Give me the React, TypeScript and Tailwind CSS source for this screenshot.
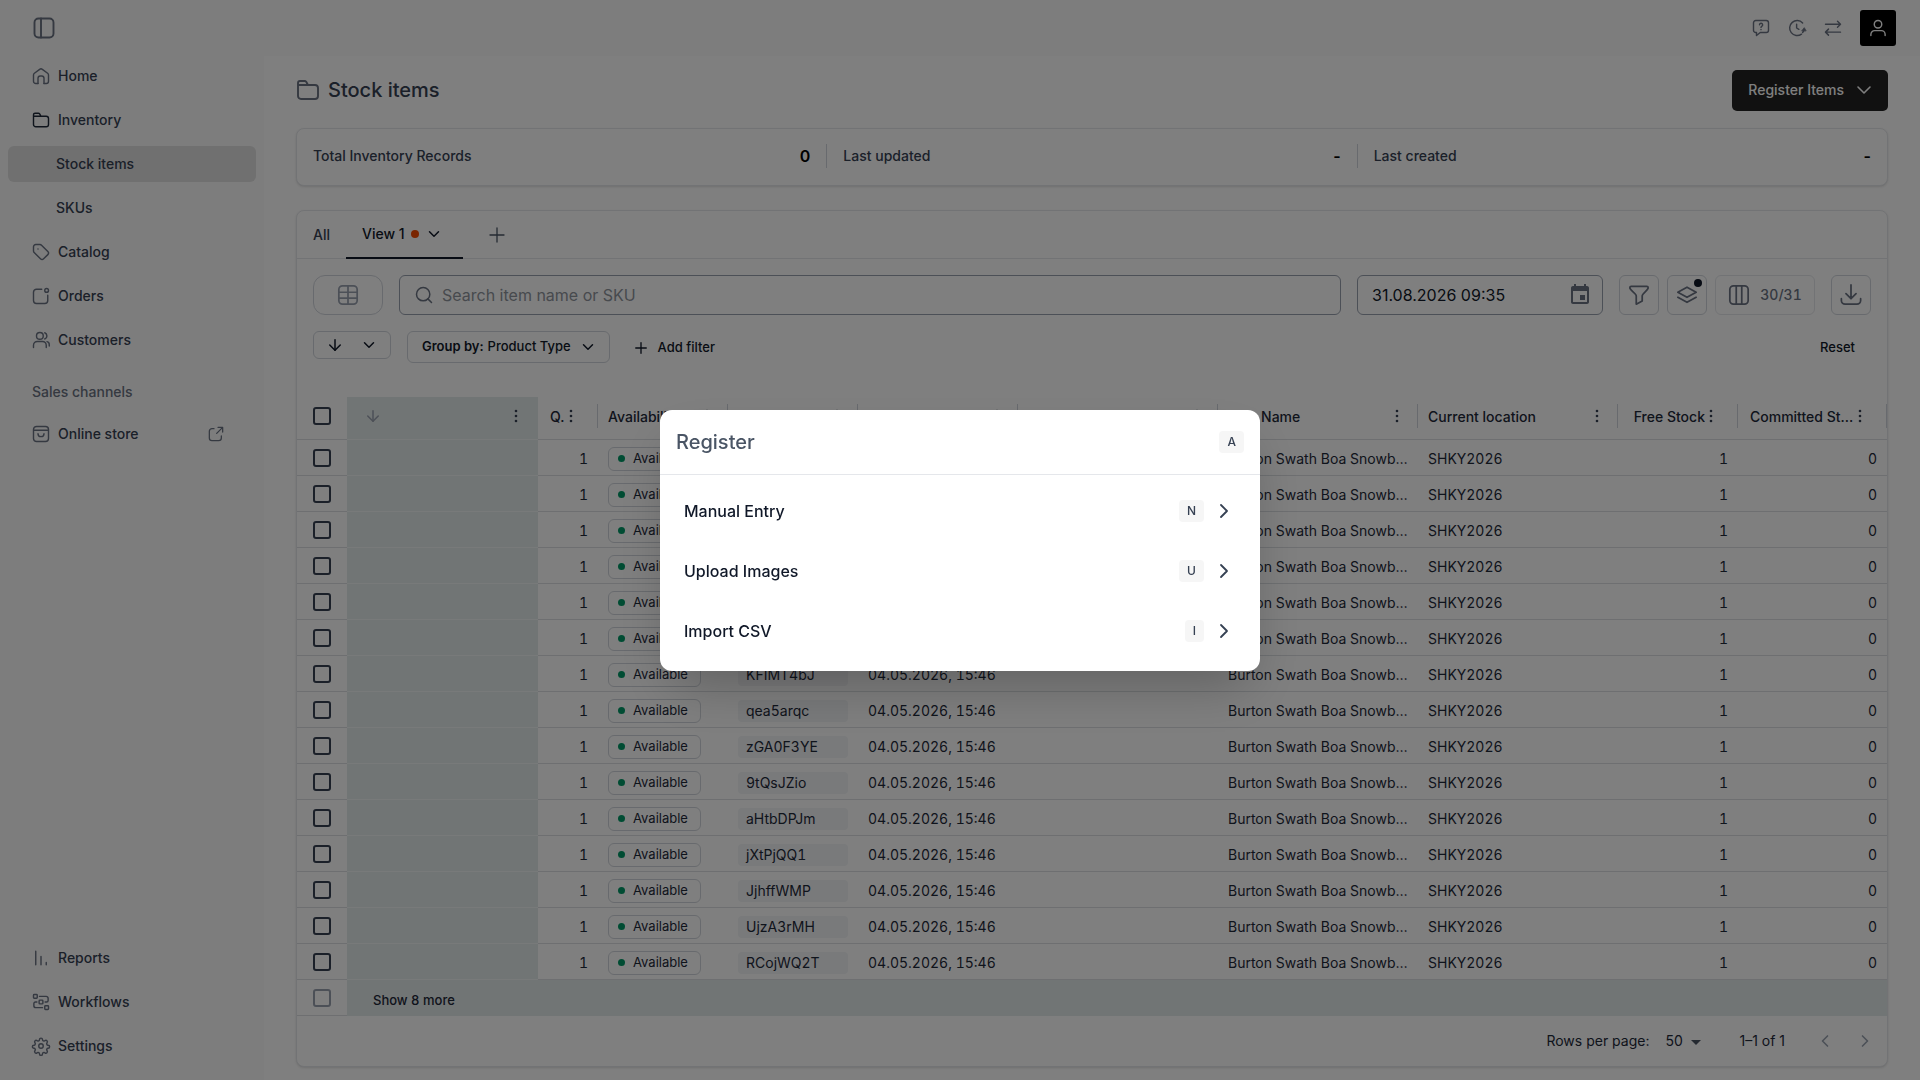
import React, { useState } from 'react';
import {
  ArrowDown,
  ChevronDown,
  ChevronLeft,
  ChevronRight,
  Plus,
  Search,
} from 'lucide-react';

type IconName =
  | 'panel'
  | 'home'
  | 'folder'
  | 'tag'
  | 'orders'
  | 'users'
  | 'store'
  | 'external'
  | 'reports'
  | 'workflows'
  | 'settings'
  | 'help'
  | 'clock'
  | 'swap'
  | 'user'
  | 'table'
  | 'filter'
  | 'layers'
  | 'columns'
  | 'download';

const icons: Record<IconName, React.ReactNode> = {
  panel: (
    <>
      <rect x="2.5" y="2.5" width="19" height="19" rx="4" />
      <path d="M9 2.5v19" />
    </>
  ),
  home: (
    <>
      <path d="M8 22v-7a3 3 0 0 1 3-3h2a3 3 0 0 1 3 3v7" />
      <path d="M8 22H5a3 3 0 0 1-3-3v-8.2a3 3 0 0 1 1.2-2.4l7-5.3a3 3 0 0 1 3.6 0l7 5.3a3 3 0 0 1 1.2 2.4V19a3 3 0 0 1-3 3h-3" />
    </>
  ),
  folder: (
    <path d="M2 8V5a2 2 0 0 1 2-2h4.600a2 2 0 0 1 1.600.8L12 7h7a3 3 0 0 1 3 3v8a3 3 0 0 1-3 3H5a3 3 0 0 1-3-3V7h10" />
  ),
  tag: (
    <>
      <path d="M2 5v5.6a3 3 0 0 0 .9 2.1l8.4 8.4a3 3 0 0 0 4.2 0l5.6-5.6a3 3 0 0 0 0-4.2l-8.4-8.4a3 3 0 0 0-2.1-.9H5a3 3 0 0 0-3 3z" />
      <path d="M8 8h.01" />
    </>
  ),
  orders: (
    <>
      <path d="M13 3H6a4 4 0 0 0-4 4v11a4 4 0 0 0 4 4h11a4 4 0 0 0 4-4v-7" />
      <circle cx="19.5" cy="4.5" r="2.5" />
    </>
  ),
  users: (
    <>
      <circle cx="10.5" cy="6.5" r="4.5" />
      <path d="M2 22v-3a5 5 0 0 1 5-5h7a5 5 0 0 1 5 5v3" />
      <path d="M17 2.3a4.5 4.5 0 0 1 0 8.4M20 14.2a4 4 0 0 1 3 4V20" />
    </>
  ),
  store: (
    <>
      <rect x="2" y="2" width="20" height="20" rx="4" />
      <path d="M2.500 7h19" />
      <path d="M8 11.500a4 4 0 0 0 8 0" />
    </>
  ),
  external: (
    <>
      <path d="M9 4H6a4 4 0 0 0-4 4v10a4 4 0 0 0 4 4h10a4 4 0 0 0 4-4v-3" />
      <path d="M15 2h7v7M22 2l-9 9" />
    </>
  ),
  reports: <path d="M5 3v18M12 10v11M19 18v3" />,
  workflows: (
    <>
      <rect x="2" y="2" width="5" height="5" rx="1" />
      <rect x="9.5" y="9.5" width="5" height="5" rx="1" />
      <rect x="17" y="17" width="5" height="5" rx="1" />
      <path d="M10 4.5h9a2.5 2.5 0 0 1 2.5 2.5v3a2 2 0 0 1-2 2h-2M14 19.5H5A2.5 2.5 0 0 1 2.5 17v-3a2 2 0 0 1 2-2h2" />
    </>
  ),
  settings: (
    <>
      <circle cx="12" cy="12" r="3" />
      <path d="M10 3.5a2 2 0 0 1 4 0l.4 1.3 1.6.7 1.3-.6a2 2 0 0 1 2.8 2.8l-.6 1.3.7 1.6 1.3.4a2 2 0 0 1 0 4l-1.3.4-.7 1.6.6 1.3a2 2 0 0 1-2.8 2.8l-1.3-.6-1.6.7-.4 1.3a2 2 0 0 1-4 0l-.4-1.3-1.6-.7-1.3.6a2 2 0 0 1-2.8-2.8l.6-1.3-.7-1.6-1.3-.4a2 2 0 0 1 0-4l1.3-.4.7-1.6-.6-1.3a2 2 0 0 1 2.8-2.8l1.3.6 1.6-.7z" />
    </>
  ),
  help: (
    <>
      <path d="M5 2h14a3 3 0 0 1 3 3v10a3 3 0 0 1-3 3h-8l-5 4v-4H5a3 3 0 0 1-3-3V5a3 3 0 0 1 3-3z" />
      <path d="M10 7.7a2.1 2.1 0 1 1 3 2c-.7.4-1 .8-1 1.5M12 14v.2" />
    </>
  ),
  clock: (
    <>
      <path d="M19.5 5.2a10 10 0 1 0-1.500 15" />
      <path d="M11.5 7v5l3 1.8" />
      <path d="M18.5 15.500l3.200-4 2.300 4z" fill="currentColor" strokeWidth={1} />
      <path d="M21.500 14a9 9 0 0 1-2 4" />
    </>
  ),
  swap: <path d="M2 7h20M18 3l4 4-4 4M22 17.5H2M6 13.5l-4 4 4 4" />,
  user: (
    <>
      <circle cx="12" cy="7" r="5" />
      <path d="M2.5 22v-1.500a5 5 0 0 1 5-5h9a5 5 0 0 1 5 5V22" />
    </>
  ),
  table: (
    <>
      <rect x="2" y="2" width="20" height="20" rx="4" />
      <path d="M2 9h20M2 15.5h20M12 2v20" />
    </>
  ),
  filter: (
    <path d="M3.5 2.5h17A1.500 1.500 0 0 1 22 4c0 3-6.500 6-6.500 9v5.500L9 22v-9C9 10 2 7 2 4a1.500 1.500 0 0 1 1.500-1.500z" />
  ),
  layers: (
    <>
      <path d="M12 3.5 22 9l-10 5.500L2 9z" />
      <path d="m2 14.500 10 5.500 10-5.500" />
    </>
  ),
  columns: (
    <>
      <rect x="2" y="2" width="20" height="20" rx="4" />
      <path d="M9 2v20M15 2v20" />
    </>
  ),
  download: <path d="M12 1v15M6.5 10.5 12 16l5.5-5.5M1.5 16v2a4 4 0 0 0 4 4h13a4 4 0 0 0 4-4v-2" />,
};

function Icon({ name, className }: { name: IconName; className?: string }) {
  return (
    <svg
      viewBox="0 0 24 24"
      fill="none"
      stroke="currentColor"
      strokeWidth={1.9}
      strokeLinecap="round"
      strokeLinejoin="round"
      className={`shrink-0 overflow-visible ${className ?? 'size-4'}`}
      aria-hidden="true"
    >
      {icons[name]}
    </svg>
  );
}

function Dots() {
  return (
    <svg viewBox="0 0 4 14" className="h-[14px] w-1 shrink-0 text-gray-700" fill="currentColor" aria-hidden="true">
      <circle cx="2" cy="2" r="1.3" />
      <circle cx="2" cy="7" r="1.3" />
      <circle cx="2" cy="12" r="1.3" />
    </svg>
  );
}

interface NavItem {
  label: string;
  icon?: IconName;
  active?: boolean;
  external?: boolean;
}

const mainNav: NavItem[] = [
  { label: 'Home', icon: 'home' },
  { label: 'Inventory', icon: 'folder' },
  { label: 'Stock items', active: true },
  { label: 'SKUs' },
  { label: 'Catalog', icon: 'tag' },
  { label: 'Orders', icon: 'orders' },
  { label: 'Customers', icon: 'users' },
];

const bottomNav: NavItem[] = [
  { label: 'Reports', icon: 'reports' },
  { label: 'Workflows', icon: 'workflows' },
  { label: 'Settings', icon: 'settings' },
];

const stats = [
  { label: 'Total Inventory Records', value: '0' },
  { label: 'Last updated', value: '-' },
  { label: 'Last created', value: '-' },
];

const itemIds = [
  'Xw2PkR7a',
  'bN8sLq3T',
  'Yc5VhJ9e',
  'mT4ZgW6d',
  'Rk7DfB2x',
  'pL9QnC5u',
  'KFIMT4bJ',
  'qea5arqc',
  'zGA0F3YE',
  '9tQsJZio',
  'aHtbDPJm',
  'jXtPjQQ1',
  'JjhffWMP',
  'UjzA3rMH',
  'RCojWQ2T',
];

const registerOptions = [
  { label: 'Manual Entry', shortcut: 'N' },
  { label: 'Upload Images', shortcut: 'U' },
  { label: 'Import CSV', shortcut: 'I' },
];

function NavLink({ item }: { item: NavItem }) {
  return (
    <a
      href="#"
      className={`flex h-9 items-center rounded-md pr-8 text-sm font-medium text-gray-700 ${
        item.icon ? 'pl-6' : 'pl-12'
      } ${item.active ? 'bg-[#e0e0e0]' : ''}`}
    >
      {item.icon && (
        <Icon
          name={item.icon}
          className={`mr-2 size-[18px] ${item.label === 'Inventory' ? 'text-gray-800' : 'text-gray-500'}`}
        />
      )}
      {item.label}
      {item.external && <Icon name="external" className="ml-auto size-4 text-gray-500" />}
    </a>
  );
}

function Sidebar() {
  return (
    <aside className="flex w-[264px] shrink-0 flex-col px-2">
      <nav className="mt-[2px] flex flex-col gap-2">
        {mainNav.map((item) => (
          <NavLink key={item.label} item={item} />
        ))}
      </nav>
      <p className="mt-[22px] mb-3 pl-6 text-sm leading-6 font-medium text-gray-500">Sales channels</p>
      <NavLink item={{ label: 'Online store', icon: 'store', external: true }} />
      <nav className="mt-auto mb-4 flex flex-col gap-2">
        {bottomNav.map((item) => (
          <NavLink key={item.label} item={item} />
        ))}
      </nav>
    </aside>
  );
}

function TopBar() {
  return (
    <header className="flex h-14 shrink-0 items-center justify-between pr-6 pl-8">
      <button aria-label="Toggle sidebar">
        <Icon name="panel" className="size-6 text-gray-500" />
      </button>
      <div className="flex items-center gap-[18px] text-gray-500">
        <button aria-label="Help">
          <Icon name="help" className="size-[18px]" />
        </button>
        <button aria-label="History">
          <Icon name="clock" className="size-[18px]" />
        </button>
        <button aria-label="Switch">
          <Icon name="swap" className="size-[18px]" />
        </button>
        <button aria-label="Account" className="flex size-9 items-center justify-center rounded-[3px] bg-black text-white">
          <Icon name="user" className="size-[18px]" />
        </button>
      </div>
    </header>
  );
}

function Stats() {
  return (
    <section className="mt-4 flex h-[58px] items-center rounded-lg border border-gray-200 bg-white pb-[2px] shadow">
      {stats.map((stat, index) => (
        <div
          key={stat.label}
          className={`flex h-6 flex-1 items-center justify-between px-4 text-gray-700 ${
            index > 0 ? 'border-l border-gray-300' : ''
          }`}
        >
          <span className="text-sm font-medium">{stat.label}</span>
          <span className="text-base font-semibold text-black">{stat.value}</span>
        </div>
      ))}
    </section>
  );
}

function Toolbar() {
  const [search, setSearch] = useState('');
  const [date, setDate] = useState('31.08.2026 09:35');

  return (
    <div className="px-4 pt-4">
      <div className="flex h-10 items-center">
        <button aria-label="Table view" className="mr-4 flex h-full w-[70px] shrink-0 items-center justify-center rounded-xl border border-gray-300 text-gray-400">
          <Icon name="table" className="size-[22px]" />
        </button>
        <label className="mr-4 flex h-full min-w-0 flex-1 items-center rounded-md border border-gray-400 px-[14px]">
          <Search className="mr-2 size-5 shrink-0 text-gray-500" strokeWidth={1.8} />
          <input
            aria-label="Search"
            value={search}
            onChange={(e) => setSearch(e.target.value)}
            placeholder="Search item name or SKU"
            className="w-full text-base outline-none placeholder:text-[#8f949c]"
          />
        </label>
        <label className="mr-4 flex h-full w-[246px] shrink-0 items-center rounded-md border border-gray-400 pr-[10px] pl-[14px]">
          <input
            aria-label="Date"
            value={date}
            onChange={(e) => setDate(e.target.value)}
            className="min-w-0 flex-1 text-base text-gray-900 outline-none"
          />
          <svg viewBox="0 0 24 24" className="size-6 text-gray-500" fill="currentColor" aria-hidden="true">
            <path d="M17 12h-5v5h5v-5zM16 1v2H8V1H6v2H5c-1.11 0-1.99.9-1.99 2L3 19c0 1.1.89 2 2 2h14c1.1 0 2-.9 2-2V5c0-1.1-.9-2-2-2h-1V1h-2zm3 18H5V8h14v11z" />
          </svg>
        </label>
        <button aria-label="Filter" className="mr-2 flex size-10 shrink-0 items-center justify-center rounded-md border border-gray-300 text-gray-500">
          <Icon name="filter" className="size-[22px]" />
        </button>
        <button aria-label="Grouping" className="relative mr-2 flex size-10 shrink-0 items-center justify-center rounded-md border border-gray-300 text-gray-500">
          <Icon name="layers" className="size-[22px]" />
          <span className="absolute top-[3px] right-1 size-2 rounded-full bg-gray-900" />
        </button>
        <button className="mr-4 flex h-10 w-[100px] shrink-0 items-center justify-center gap-[10px] rounded-md border border-gray-200 text-sm font-medium text-gray-500 tabular-nums">
          <Icon name="columns" className="size-[22px]" />
          30/31
        </button>
        <button aria-label="Download" className="flex size-10 shrink-0 items-center justify-center rounded-md border border-gray-300 text-gray-500">
          <Icon name="download" className="size-[22px]" />
        </button>
      </div>

      <div className="mt-4 flex h-8 items-center text-[13px] font-medium text-gray-900">
        <button aria-label="Sort" className="flex h-7 w-[78px] items-center justify-between self-start rounded-md border border-gray-300 px-3">
          <ArrowDown className="size-[18px]" />
          <ChevronDown className="size-[18px]" />
        </button>
        <button className="ml-4 flex h-8 items-center rounded-md border border-gray-300 pr-3 pl-[14px]">
          <b className="mr-1 font-semibold">Group by:</b> Product Type
          <ChevronDown className="ml-2 size-[18px]" />
        </button>
        <button className="ml-[22px] flex items-center gap-2 pt-[2px]">
          <Plus className="size-[18px]" strokeWidth={1.8} />
          Add filter
        </button>
        <button className="mr-4 ml-auto pt-[2px]">Reset</button>
      </div>
    </div>
  );
}

function HeadCell({ label, right }: { label: string; right?: boolean }) {
  return (
    <th className="border-b border-[#dcdfe3] p-0 pb-1 font-medium">
      <div
        className={`flex h-6 items-center gap-1 border-r border-gray-300 ${
          right ? 'pr-6 pl-3' : 'pr-[18px] pl-[10px]'
        }`}
      >
        <span className={`min-w-0 flex-1 truncate pt-[2px] ${right ? 'text-right' : 'text-left'}`}>{label}</span>
        <Dots />
      </div>
    </th>
  );
}

function CheckBox({ label, disabled }: { label: string; disabled?: boolean }) {
  return (
    <input
      type="checkbox"
      aria-label={label}
      disabled={disabled}
      className="block size-[18px] appearance-none rounded-[3px] border-2 border-gray-700 disabled:border-gray-400"
    />
  );
}

function StockTable() {
  return (
    <table className="w-full table-fixed border-separate border-spacing-0 text-sm text-gray-800">
      <colgroup>
        <col className="w-[50px]" />
        <col className="w-[191px]" />
        <col className="w-[60px]" />
        <col className="w-[130px]" />
        <col className="w-[130px]" />
        <col className="w-[160px]" />
        <col className="w-[200px]" />
        <col className="w-[200px]" />
        <col className="w-[200px]" />
        <col className="w-[120px]" />
        <col />
      </colgroup>
      <thead>
        <tr className="h-[43px]">
          <th className="border-b border-[#dcdfe3] p-0 pb-1 pl-4">
            <CheckBox label="Select all" />
          </th>
          <th className="border-b border-[#f0f4f4] bg-[#e3eaea] p-0 pb-1">
            <div className="flex items-center justify-between pr-5 pl-[17px]">
              <ArrowDown className="size-[18px] text-gray-400" />
              <Dots />
            </div>
          </th>
          <th className="border-b border-[#dcdfe3] p-0 pb-1 font-medium">
            <div className="flex h-6 items-center gap-[5px] border-r border-gray-300 pl-3">
              <span className="pt-[2px]">Q.</span> <Dots />
            </div>
          </th>
          <HeadCell label="Availability" />
          <HeadCell label="Item ID" />
          <HeadCell label="Created" />
          <HeadCell label="Image" />
          <HeadCell label="Item Name" />
          <HeadCell label="Current location" />
          <HeadCell label="Free Stock" right />
          <HeadCell label="Committed Stock" right />
        </tr>
      </thead>
      <tbody className="tabular-nums">
        {itemIds.map((id) => (
          <tr key={id} className="h-9 *:border-b *:border-[#dcdfe3] *:pt-[2px] *:pb-0">
            <td className="pt-0! pl-4">
              <CheckBox label={`Select ${id}`} />
            </td>
            <td className="border-[#f0f4f4]! bg-[#e3eaea]" />
            <td className="pr-[10px] text-right">1</td>
            <td className="pl-[10px]">
              <span className="flex h-6 w-[93px] items-center gap-2 rounded-md border border-gray-300 pl-[9px] text-[13px]">
                <span className="size-[7px] rounded-full bg-emerald-600" />
                Available
              </span>
            </td>
            <td className="px-[10px]">
              <span className="block h-[22px] rounded bg-gray-100 pl-2 leading-[22px]">{id}</span>
            </td>
            <td className="truncate pl-[10px]">04.05.2026, 15:46</td>
            <td />
            <td className="truncate px-[10px]">Burton Swath Boa Snowboard Bindings</td>
            <td className="pl-[10px]">SHKY2026</td>
            <td className="pr-[10px] text-right">1</td>
            <td className="pr-[10px] text-right">0</td>
          </tr>
        ))}
        <tr className="h-9">
          <td className="border-b border-[#dcdfe3] py-0 pl-4">
            <CheckBox label="Select group" disabled />
          </td>
          <td colSpan={10} className="bg-[#e3eaea] py-0 pt-1 pl-[26px] text-[13px] font-medium">
            <button>Show 8 more</button>
          </td>
        </tr>
      </tbody>
    </table>
  );
}

function Pagination() {
  return (
    <footer className="flex h-[50px] items-center justify-end pr-3 text-sm text-gray-800">
      <label htmlFor="page-size" className="mr-4">
        Rows per page:
      </label>
      <div className="relative mr-[38px] w-9">
        <select id="page-size" defaultValue="50" className="block w-full appearance-none outline-none">
          <option>50</option>
          <option>100</option>
        </select>
        <svg viewBox="0 0 10 5" className="pointer-events-none absolute top-[9px] right-0 w-[10px]" aria-hidden="true">
          <path d="M0 0h10L5 5z" fill="#4b5563" />
        </svg>
      </div>
      <span className="mr-[30px]">1–1 of 1</span>
      <button aria-label="Previous page" disabled className="mr-5 text-gray-400">
        <ChevronLeft className="size-5" />
      </button>
      <button aria-label="Next page" disabled className="text-gray-400">
        <ChevronRight className="size-5" />
      </button>
    </footer>
  );
}

function KeyHint({ children }: { children: React.ReactNode }) {
  return (
    <kbd className="flex h-[22px] items-center rounded bg-[#f6f6f6] px-2 font-[Inter,sans-serif] text-xs font-medium text-gray-700">
      {children}
    </kbd>
  );
}

function RegisterDialog() {
  return (
    <div className="fixed inset-0 flex items-center justify-center bg-black/50">
      <div role="dialog" aria-label="Register" className="w-[600px] rounded-xl bg-white shadow-2xl">
        <div className="flex h-[65px] items-center justify-between border-b border-gray-200 px-4">
          <h2 className="text-xl font-medium text-gray-600">Register</h2>
          <KeyHint>A</KeyHint>
        </div>
        <div className="px-2 pt-[6px] pb-[10px]">
          {registerOptions.map((option) => (
            <button key={option.label} className="flex h-[60px] w-full items-center px-4 text-base font-medium text-gray-900">
              <span className="mr-auto">{option.label}</span>
              <KeyHint>{option.shortcut}</KeyHint>
              <ChevronRight className="ml-2 size-6 text-gray-700" strokeWidth={1.8} />
            </button>
          ))}
        </div>
      </div>
    </div>
  );
}

export default function App() {
  return (
    <div className="flex min-h-screen flex-col bg-[#fbfbfb] font-[Inter,sans-serif]">
      <TopBar />
      <div className="flex flex-1">
        <Sidebar />
        <main className="min-w-0 flex-1 bg-white px-8 pt-3 pb-3">
          <div className="flex h-11 items-center justify-between">
            <h1 className="flex items-center gap-2 text-xl font-medium text-gray-700">
              <Icon name="folder" className="size-6 text-gray-500" />
              Stock items
            </h1>
            <button className="flex h-[41px] items-center gap-2 rounded-[5px] bg-[#222] pr-3 pl-4 text-sm font-medium text-white">
              Register Items
              <ChevronDown className="size-6" strokeWidth={1.6} />
            </button>
          </div>
          <Stats />
          <section className="mt-6 rounded-lg border border-gray-200 bg-white shadow-sm">
            <div className="flex h-12 items-center border-b border-gray-200 px-4 text-sm font-medium text-gray-700">
              <button className="mr-4">All</button>
              <button className="flex h-12 items-center border-b-2 border-gray-900 px-4 pr-5 text-gray-900">
                View 1
                <span className="mr-[6px] ml-[6px] size-2 rounded-full bg-orange-600" />
                <ChevronDown className="size-[18px]" />
              </button>
              <button aria-label="Add view" className="ml-[22px]">
                <Plus className="size-6 text-gray-600" strokeWidth={1.3} />
              </button>
            </div>
            <Toolbar />
            <div className="mt-[34px]">
              <StockTable />
            </div>
            <Pagination />
          </section>
        </main>
      </div>
      <RegisterDialog />
    </div>
  );
}
